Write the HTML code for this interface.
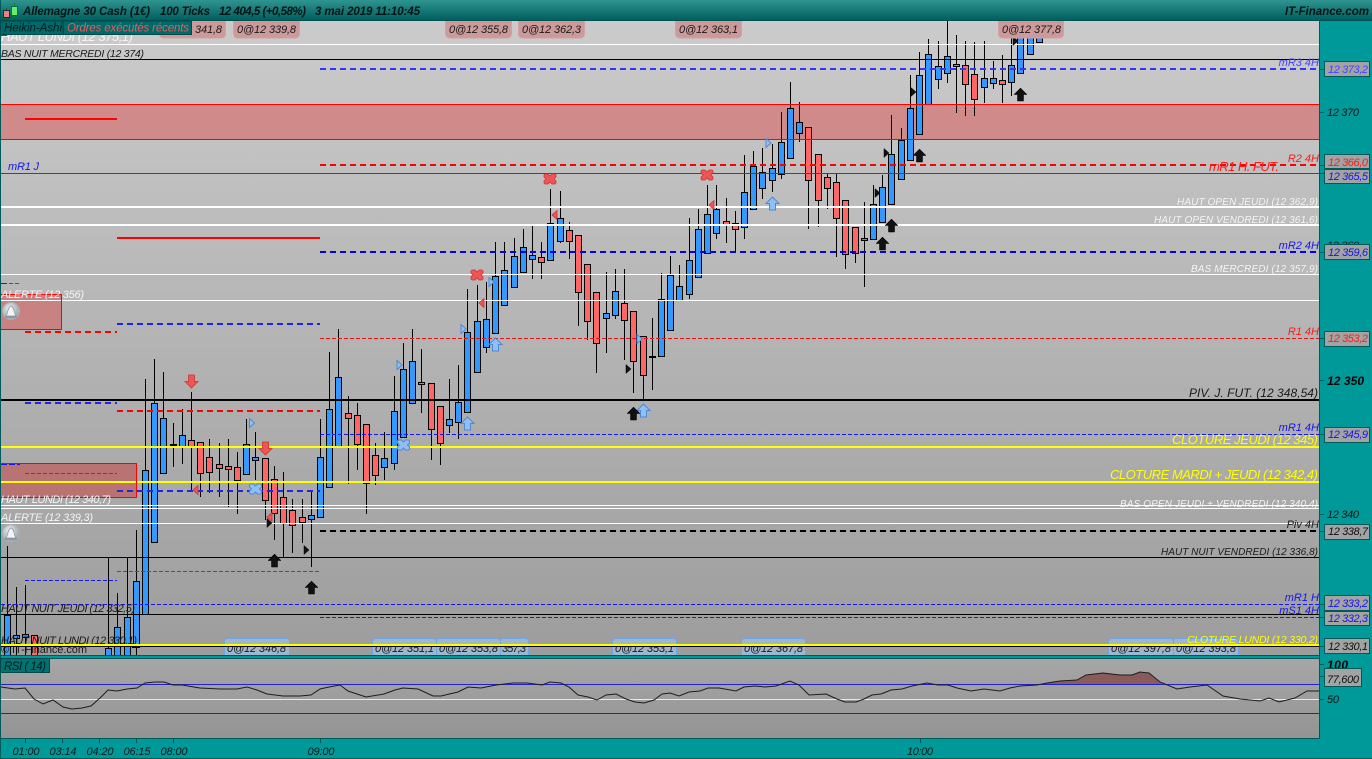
<!DOCTYPE html>
<html lang="fr"><head><meta charset="utf-8"><title>Allemagne 30 Cash</title>
<style>
html,body{margin:0;padding:0;background:#009999;width:1372px;height:759px;overflow:hidden}
svg{display:block;position:absolute;left:0;top:0}
text{font-family:"Liberation Sans",Arial,sans-serif;font-style:italic;font-size:11px;white-space:pre}
.b{font-weight:bold;font-size:11.5px}
.n{font-style:normal}
.w{fill:#f4f4f4}.k{fill:#1a1a1a}.y{fill:#ffff00}.r{fill:#ff1a1a}.u{fill:#1414ee}.u2{fill:#4444ff}
.p{fill:#a3a3a3;stroke:#005a5a;stroke-width:1}
.pink{fill:#cc9a9a;stroke:#d4a0a0;stroke-width:1}
.bl{fill:#a0b6cf;stroke:#6fa6e6;stroke-width:1}
.tab{fill:#006a6a;stroke:#004a4a;stroke-width:1}
</style></head><body>
<svg width="1372" height="759" viewBox="0 0 1372 759" xmlns="http://www.w3.org/2000/svg">
<defs>
<linearGradient id="t" x1="0" y1="0" x2="0" y2="1"><stop offset="0" stop-color="#2f9490"/><stop offset="1" stop-color="#005f5f"/></linearGradient>
<linearGradient id="c" x1="0" y1="0" x2="0" y2="1"><stop offset="0" stop-color="#cbcbcb"/><stop offset="1" stop-color="#9d9d9d"/></linearGradient>
<linearGradient id="s" x1="0" y1="0" x2="0" y2="1"><stop offset="0" stop-color="#a6a6a6"/><stop offset="1" stop-color="#949494"/></linearGradient>
<radialGradient id="bell" cx=".4" cy=".35" r=".7"><stop offset="0" stop-color="#ececec"/><stop offset="1" stop-color="#929da6"/></radialGradient>
<clipPath id="cc"><rect x="1" y="21" width="1318" height="634"/></clipPath>
<path id="up" d="M0 0l6.500 6.500h-3.500v6.500h-6v-6.500h-3.500z"/>
<path id="down" d="M0 13l6.500-6.500h-3.500v-6.500h-6v6.500h-3.500z"/>
<path id="rt" d="M0-4.500l5 4.500-5 4.500z"/>
<path id="lf" d="M0-4.500l-5 4.500 5 4.500z"/>
<path id="x" d="M-5-5h3l2 2 2-2h3l1 1v2l-2 2 2 2v2l-1 1h-3l-2-2-2 2h-3l-1-1v-2l2-2-2-2v-2z"/>
</defs>

<rect width="1372" height="759" fill="#009999"/>
<rect x="0" y="0" width="1372" height="20" fill="url(#t)"/>
<rect x="0" y="20" width="1372" height="1" fill="#004f4f"/>
<rect x="1" y="21" width="1318" height="634" fill="url(#c)"/>
<rect x="1" y="659" width="1318" height="79" fill="url(#s)"/>
<path d="M0 655.500H1319M0 658.500H1319M0 738.500H1319M0 758.500H1372M1319.500 20V739M.5 0V759" stroke="#005a5a" fill="none"/>

<g clip-path="url(#cc)">
<rect x="1" y="104" width="1318" height="35" fill="#d08a8a"/>
<rect x="1" y="294" width="61" height="36" fill="#c98282"/>
<rect x="1" y="463" width="135" height="35" fill="#b97373"/>

<path stroke="#000" fill="none" d="M7.500 546V655M16.500 587V655M25.500 585V655M34.500 635V655M108.500 558V655M117.500 593V655M127.500 558V655M136.500 530V655M145.500 379V614M154.500 359V542M163.500 372V473M173.500 423V467M182.500 409V464M191.500 392V491M200.500 442V497M209.500 439V493M219.500 443V497M228.500 439V507M237.500 452V514M246.500 419V474M255.500 432V480M265.500 458V520M274.500 466V540M283.500 472V557M292.500 499V553M302.500 499V543M311.500 492V567M320.500 419V517M329.500 352V487M338.500 329V447M348.500 396V484M357.500 403V470M366.500 424V514M375.500 443V485M384.500 432V480M394.500 376V470M403.500 343V437M412.500 329V403M421.500 349V413M431.500 383V460M440.500 406V465M449.500 379V433M458.500 365V439M467.500 289V412M477.500 285V372M486.500 282V353M495.500 242V333M504.500 242V305M514.500 238V287M523.500 229V272M532.500 226V279M541.500 242V279M550.500 189V260M560.500 191V243M569.500 222V259M578.500 235V326M587.500 264V340M596.500 292V373M606.500 272V353M615.500 269V319M624.500 269V360M633.500 311V393M643.500 336V399M652.500 318V390M661.500 273V356M670.500 256V330M679.500 265V300M689.500 218V299M698.500 209V277M707.500 185V253M716.500 185V239M726.500 198V243M735.500 211V252M744.500 155V239M753.500 151V209M762.500 148V199M772.500 144V192M781.500 112V179M790.500 82V158M799.500 102V142M808.500 127V229M818.500 154V227M827.500 173V209M836.500 174V257M845.500 200V269M855.500 227V263M864.500 202V287M873.500 185V239M882.500 175V222M891.500 115V204M901.500 128V179M910.500 75V160M919.500 52V134M928.500 39V104M938.500 41V89M947.500 20V83M956.500 35V113M965.500 41V116M974.500 42V116M984.500 41V103M993.500 61V89M1002.500 55V103M1011.500 33V96M1020.500 20V73M1030.500 20V54M1039.500 20V42"/>
<path stroke="#000" stroke-width="2" d="M170 445h7M649 357h7M132 647h8"/>

<path fill="#3399ff" stroke="#000" d="M4.500 615.500h6V660h-6zM13.500 635.500h6v3h-6zM22.500 634.500h6v3h-6zM105.500 648.500h6V660h-6zM114.500 627.500h6V660h-6zM124.500 617.500h6V660h-6zM133.500 581.500h6v66h-6zM142.500 470.500h6v144h-6zM151.500 403.500h6v139h-6zM160.500 418.500h6v55h-6zM179.500 435.500h6v11h-6zM243.500 444.500h6v30h-6zM252.500 457.500h6v3h-6zM308.500 515.500h6v4h-6zM317.500 457.500h6v60h-6zM326.500 409.500h6v78h-6zM335.500 377.500h6v70h-6zM381.500 458.500h6v9h-6zM391.500 411.500h6v52h-6zM400.500 369.500h6v68h-6zM409.500 361.500h6v42h-6zM446.500 419.500h6v6h-6zM455.500 402.500h6v20h-6zM464.500 332.500h6v80h-6zM474.500 321.500h6v51h-6zM483.500 319.500h6v28h-6zM492.500 276.500h6v57h-6zM501.500 270.500h6v35h-6zM511.500 256.500h6v31h-6zM520.500 247.500h6v25h-6zM529.500 255.500h6v4h-6zM547.500 223.500h6v37h-6zM557.500 218.500h6v23h-6zM603.500 313.500h6v5h-6zM612.500 291.500h6v24h-6zM658.500 299.500h6v57h-6zM667.500 275.500h6v55h-6zM676.500 286.500h6v14h-6zM686.500 260.500h6v34h-6zM695.500 229.500h6v48h-6zM704.500 214.500h6v39h-6zM713.500 209.500h6v24h-6zM741.500 192.500h6v35h-6zM750.500 166.500h6v43h-6zM759.500 172.500h6v16h-6zM769.500 168.500h6v12h-6zM778.500 142.500h6v32h-6zM787.500 108.500h6v50h-6zM796.500 122.500h6v11h-6zM861.500 238.500h6v2h-6zM870.500 204.500h6v35h-6zM879.500 187.500h6v35h-6zM888.500 154.500h6v50h-6zM898.500 140.500h6v39h-6zM907.500 108.500h6v52h-6zM916.500 75.500h6v59h-6zM925.500 54.500h6v50h-6zM935.500 66.500h6v13h-6zM944.500 56.500h6v17h-6zM981.500 78.500h6v9h-6zM990.500 78.500h6v5h-6zM1008.500 65.500h6v17h-6zM1017.500 20.500h6v53h-6zM1027.500 20.500h6v34h-6zM1036.500 20.500h6v22h-6z"/>
<path fill="#ff6666" stroke="#000" d="M31.500 635.500h6V660h-6zM188.500 440.500h6v6h-6zM197.500 442.500h6v31h-6zM206.500 457.500h6v15h-6zM216.500 464.500h6v4h-6zM225.500 466.500h6v3h-6zM234.500 467.500h6v13h-6zM262.500 458.500h6v42h-6zM271.500 479.500h6v34h-6zM280.500 497.500h6v26h-6zM289.500 510.500h6v15h-6zM299.500 517.500h6v5h-6zM345.500 413.500h6v5h-6zM354.500 415.500h6v29h-6zM363.500 424.500h6v59h-6zM372.500 455.500h6v20h-6zM418.500 382.500h6v2h-6zM428.500 383.500h6v46h-6zM437.500 406.500h6v37h-6zM538.500 257.500h6v5h-6zM566.500 230.500h6v11h-6zM575.500 235.500h6v57h-6zM584.500 264.500h6v57h-6zM593.500 292.500h6v51h-6zM621.500 303.500h6v17h-6zM630.500 311.500h6v50h-6zM640.500 336.500h6v39h-6zM723.500 221.500h6v3h-6zM732.500 223.500h6v6h-6zM805.500 127.500h6v53h-6zM815.500 154.500h6v46h-6zM824.500 177.500h6v11h-6zM833.500 182.500h6v36h-6zM842.500 200.500h6v54h-6zM852.500 227.500h6v26h-6zM953.500 64.500h6v2h-6zM962.500 65.500h6v19h-6zM971.500 74.500h6v25h-6zM999.500 80.500h6v4h-6z"/>

<g fill="none">
<path d="M1 44.500H1319M1 274.500H1319M1 300.500H1319M1 505.500H1319M1 508.500H1319M1 523.500H1319" stroke="#fff"/>
<path d="M1 207H1319M1 225H1319" stroke="#fff" stroke-width="2"/>
<path d="M1 59.500H1319M1 557.500H1319M1 614.500H1319" stroke="#000"/>
<path d="M1 400H1319" stroke="#000" stroke-width="2"/>
<path d="M1 104.500H1319M1 139.500H1319" stroke="#ff0000"/>
<path d="M1 173.500H1319" stroke="#cc1111"/>
<path d="M25 119H117M117 238H320" stroke="#ff0000" stroke-width="2"/>
<path d="M320 69H1319" stroke="#3333ff" stroke-width="2" stroke-dasharray="6 4"/>
<path d="M320 252H1319" stroke="#0000ee" stroke-width="2" stroke-dasharray="6 4"/>
<path d="M320 165H1319" stroke="#ff0000" stroke-width="2" stroke-dasharray="6 4"/>
<path d="M320 531H1319" stroke="#000" stroke-width="2" stroke-dasharray="6 4"/>
<path d="M117 324H320M25 403H117M117 491H320" stroke="#2222ee" stroke-width="2" stroke-dasharray="6 4"/>
<path d="M25 332H117M117 411H320" stroke="#ff0000" stroke-width="2" stroke-dasharray="6 4"/>
<path d="M320 338.500H1319M25 473.500H117M117 571.500H320" stroke="#ee1111" stroke-dasharray="4 2"/>
<path d="M320 434.500H1319M25 580.500H117M1 604.500H1319M320 617.500H1319" stroke="#1818ee" stroke-dasharray="4 2"/>
<path d="M1 283.500H8M1 464.500H20" stroke="#1818ee" stroke-dasharray="6 2"/>
<path d="M9 283.500H21" stroke="#ee1111" stroke-dasharray="4 2"/>
<path d="M1 447H1319M1 482H1319" stroke="#ffff00" stroke-width="2"/>
</g>
<rect x=".5" y="294.500" width="61" height="35" fill="none" stroke="#ff0000"/>
<rect x=".5" y="463.500" width="136" height="34" fill="none" stroke="#ff0000"/>

<g fill="#ee5555" stroke="#cc3333" stroke-width=".8">
<use href="#down" x="191.500" y="375"/><use href="#down" x="265.500" y="442"/>
<use href="#x" x="477" y="275"/><use href="#x" x="550" y="179"/><use href="#x" x="707" y="175"/>
<use href="#lf" x="198" y="490"/><use href="#lf" x="272" y="517"/><use href="#lf" x="484" y="303"/><use href="#lf" x="557" y="215"/><use href="#lf" x="714" y="205"/>
</g>
<g fill="#8fc0f5" stroke="#4f88d8" stroke-width="1">
<use href="#up" x="467.500" y="417"/><use href="#up" x="495.500" y="338"/><use href="#up" x="643.500" y="404"/><use href="#up" x="772.500" y="197"/>
<use href="#x" x="255.500" y="489"/><use href="#x" x="403.500" y="445"/>
<use href="#rt" x="249.500" y="423"/><use href="#rt" x="397" y="365"/><use href="#rt" x="461" y="329"/><use href="#rt" x="489" y="282"/><use href="#rt" x="766" y="143"/><use href="#rt" x="637" y="339"/>
</g>
<g fill="#111" stroke="#000" stroke-width=".5">
<use href="#up" x="274.500" y="554"/><use href="#up" x="311.500" y="581"/><use href="#up" x="633.500" y="407"/><use href="#up" x="882.500" y="237"/><use href="#up" x="891.500" y="219"/><use href="#up" x="919.500" y="149"/><use href="#up" x="1020.500" y="88"/>
<use href="#rt" x="304" y="550"/><use href="#rt" x="267" y="523"/><use href="#rt" x="626" y="369"/><use href="#rt" x="875" y="193"/><use href="#rt" x="884" y="153"/><use href="#rt" x="911" y="92"/><use href="#rt" x="1013" y="41"/>
</g>

<g>
<circle cx="11" cy="311" r="8.500" fill="url(#bell)" stroke="#a8b0b8"/>
<path d="M6 316c2-2 1.500-9 5-10 3.500 1 3 8 5 10z" fill="#f4f4f4" stroke="#8a96a0" stroke-width=".7"/>
<path d="M5 317h12" stroke="#7f8a94"/>
<circle cx="11" cy="533" r="8.500" fill="url(#bell)" stroke="#a8b0b8"/>
<path d="M6 538c2-2 1.500-9 5-10 3.500 1 3 8 5 10z" fill="#f4f4f4" stroke="#8a96a0" stroke-width=".7"/>
<path d="M5 539h12" stroke="#7f8a94"/>
</g>

<text x="1" y="41" class="w" style="font-size:13px" textLength="132">HAUT LUNDI (12 375,1)</text>
<text x="1" y="57" class="k" textLength="143" style="font-size:10.500px">BAS NUIT MERCREDI (12 374)</text>
<text x="8" y="170" class="u" textLength="31">mR1 J</text>
<text x="1" y="298" class="w" textLength="83">ALERTE (12 356)</text>
<text x="1" y="503" class="w" textLength="110">HAUT LUNDI (12 340,7)</text>
<text x="1" y="521" class="w" textLength="92">ALERTE (12 339,3)</text>
<text x="1" y="612" class="k" textLength="134">HAUT NUIT JEUDI (12 332,5)</text>
<text x="1" y="644" class="k" textLength="136">HAUT NUIT LUNDI (12 330,1)</text>
<text x="1" y="653" class="k n" textLength="86">© IT-Finance.com</text>

<g text-anchor="end">
<text x="1319" y="66" class="u2">mR3 4H</text>
<text x="1319" y="162" class="r">R2 4H</text>
<text x="1279" y="171" class="r" style="font-size:13px" textLength="70">mR1 H. FUT.</text>
<text x="1318" y="205" class="w" style="font-size:10px" textLength="141">HAUT OPEN JEUDI (12 362,9)</text>
<text x="1318" y="223" class="w" style="font-size:10px" textLength="164">HAUT OPEN VENDREDI (12 361,6)</text>
<text x="1319" y="249" class="u">mR2 4H</text>
<text x="1318" y="272" class="w" style="font-size:10px" textLength="127">BAS MERCREDI (12 357,9)</text>
<text x="1319" y="335" class="r">R1 4H</text>
<text x="1318" y="397" class="k" style="font-size:12px" textLength="129">PIV. J. FUT. (12 348,54)</text>
<text x="1319" y="431" class="u">mR1 4H</text>
<text x="1318" y="444" class="y" style="font-size:13px" textLength="146">CLOTURE JEUDI (12 345)</text>
<text x="1318" y="479" class="y" style="font-size:13px" textLength="208">CLOTURE MARDI + JEUDI (12 342,4)</text>
<text x="1318" y="507" class="w" style="font-size:10px" textLength="198">BAS OPEN JEUDI + VENDREDI (12 340,4)</text>
<text x="1319" y="528" class="k">Piv 4H</text>
<text x="1318" y="555" class="k" style="font-size:10px" textLength="157">HAUT NUIT VENDREDI (12 336,8)</text>
<text x="1319" y="601" class="u">mR1 H</text>
<text x="1319" y="614" class="u">mS1 4H</text>
</g>

<rect x="224.500" y="638.500" width="65" height="20" rx="3" class="bl"/>
<rect x="372.500" y="638.500" width="64" height="20" rx="3" class="bl"/>
<rect x="436.500" y="638.500" width="64" height="20" rx="3" class="bl"/>
<rect x="500.500" y="638.500" width="28" height="20" rx="3" class="bl"/>
<rect x="612.500" y="638.500" width="64" height="20" rx="3" class="bl"/>
<rect x="741.500" y="638.500" width="64" height="20" rx="3" class="bl"/>
<rect x="1108.500" y="638.500" width="65" height="20" rx="3" class="bl"/>
<rect x="1173.500" y="638.500" width="65" height="20" rx="3" class="bl"/>
<g fill="#1a1a1a">
<text x="227" y="652" textLength="59">0@12 346,8</text>
<text x="375" y="652" textLength="59">0@12 351,1</text>
<text x="439" y="652" textLength="59">0@12 353,8</text>
<text x="502" y="652" textLength="24">357,3</text>
<text x="615" y="652" textLength="59">0@12 353,1</text>
<text x="744" y="652" textLength="59">0@12 367,8</text>
<text x="1111" y="652" textLength="60">0@12 397,8</text>
<text x="1176" y="652" textLength="60">0@12 393,8</text>
</g>
<path d="M1 645H1319" stroke="#ffff00" stroke-width="2"/>
<path d="M1 646.500H1319" stroke="#000"/>
<text x="1318" y="643" text-anchor="end" class="y" style="font-size:10.500px" textLength="131">CLOTURE LUNDI (12 330,2)</text>

<rect x="159.500" y="17" width="66" height="21" rx="4" class="pink"/>
<rect x="233.500" y="17" width="66" height="21" rx="4" class="pink"/>
<rect x="445.500" y="17" width="66" height="21" rx="4" class="pink"/>
<rect x="518.500" y="17" width="66" height="21" rx="4" class="pink"/>
<rect x="675.500" y="17" width="66" height="21" rx="4" class="pink"/>
<rect x="998.500" y="17" width="65" height="21" rx="4" class="pink"/>
<text x="195" y="33" class="k" textLength="27">341,8</text>
<text x="237" y="33" class="k" textLength="59">0@12 339,8</text>
<text x="449" y="33" class="k" textLength="59">0@12 355,8</text>
<text x="522" y="33" class="k" textLength="59">0@12 362,3</text>
<text x="679" y="33" class="k" textLength="59">0@12 363,1</text>
<text x="1002" y="33" class="k" textLength="59">0@12 377,8</text>
<path d="M1 35.500h6" stroke="#ff0000"/>
</g>

<rect x=".5" y="21" width="62.500" height="13.500" class="tab"/>
<rect x="63.500" y="21" width="128" height="13.500" class="tab"/>
<text x="4" y="31.500" fill="#001a1a" style="font-size:11.500px" textLength="58">Heikin-Ashi</text>
<text x="67" y="31.500" fill="#e85c5c" style="font-size:11.500px" textLength="122">Ordres exécutés récents</text>

<path d="M6.500 8V20" stroke="#0a6a0a"/><rect x="3.500" y="10.500" width="6" height="7" fill="#f08080" stroke="#114" stroke-width=".8"/>
<path d="M14.500 3V18" stroke="#0a8a0a"/><rect x="11.500" y="6.500" width="6" height="9" fill="#66ee66" stroke="#055" stroke-width=".8"/>
<g fill="#001414">
<text x="23" y="15" class="b" textLength="127">Allemagne 30 Cash (1€)</text>
<text x="160" y="15" class="b" textLength="50">100 Ticks</text>
<text x="219" y="15" class="b" textLength="87">12 404,5 (+0,58%)</text>
<text x="315" y="15" class="b" textLength="105">3 mai 2019 11:10:45</text>
<text x="1285" y="15" class="b" textLength="84">IT-Finance.com</text>
</g>

<path d="M1320 69.500h4M1320 112.500h4M1320 165.500h4M1320 173.500h4M1320 252.500h4M1320 338.500h4M1320 380.500h4M1320 434.500h4M1320 514.500h4M1320 531.500h4M1320 604.500h4M1320 617.500h4M1320 646.500h4M1320 664.500h4M1320 676.500h4M1320 699.500h4" stroke="#005a5a"/>
<text x="1327" y="116" fill="#0a1414" textLength="32">12 370</text>
<text x="1327" y="385" fill="#000" class="b" style="font-size:12px" textLength="37">12 350</text>
<text x="1327" y="518" fill="#0a1414" textLength="32">12 340</text>
<text x="1327" y="669" fill="#000" class="b" style="font-size:12px" textLength="21">100</text>
<text x="1327" y="703" fill="#0a1414" textLength="12">50</text>
<text x="1327" y="249" fill="#0a1414" textLength="32">12 360</text>

<rect x="1324.500" y="61.500" width="45" height="15" class="p"/><text x="1328" y="73" fill="#4444ff" textLength="40">12 373,2</text>
<rect x="1324.500" y="154.500" width="45" height="14" class="p"/><text x="1328" y="166" fill="#ff1a1a" textLength="40">12 366,0</text>
<rect x="1324.500" y="169.500" width="45" height="14" class="p"/><text x="1328" y="180" fill="#1414ee" textLength="40">12 365,5</text>
<rect x="1324.500" y="244.500" width="45" height="15" class="p"/><text x="1328" y="256" fill="#1414ee" textLength="40">12 359,6</text>
<rect x="1324.500" y="331.500" width="45" height="15" class="p"/><text x="1328" y="342" fill="#ff1a1a" textLength="40">12 353,2</text>
<rect x="1324.500" y="427.500" width="45" height="15" class="p"/><text x="1328" y="438" fill="#1414ee" textLength="40">12 345,9</text>
<rect x="1324.500" y="524.500" width="45" height="15" class="p"/><text x="1328" y="535" fill="#111" textLength="40">12 338,7</text>
<rect x="1324.500" y="595.500" width="45" height="15" class="p"/><text x="1328" y="607" fill="#1414ee" textLength="40">12 333,2</text>
<rect x="1324.500" y="611.500" width="45" height="14" class="p"/><text x="1328" y="622" fill="#1414ee" textLength="40">12 332,3</text>
<rect x="1324.500" y="638.500" width="45" height="15" class="p"/><text x="1328" y="650" fill="#111" textLength="40">12 330,1</text>
<rect x="1324.500" y="668.500" width="37" height="18" class="p"/><text x="1327" y="683" fill="#111" textLength="32">77,600</text>

<path fill="#8b5a5a" d="M1040 684.500L1047 683L1060 681L1077 680L1086 675L1103 673L1120 675L1132 675L1140 672L1149 673L1160 682L1164 684.500z"/>
<path fill="none" stroke="#2222cc" d="M1 684.500H1319M1 713.500H1319"/>
<path fill="none" stroke="#ffff33" d="M1 699.500H1319"/>
<polyline fill="none" stroke="#1c1c1c" points="1,687 15,689 25,688 34,699 43,704 53,700 63,707 72,709 82,708 91,706 100,698 108,690 117,691 127,689 137,688 145,683 155,682 164,682 173,685 182,685 200,688 220,689 237,689 247,687 257,690 267,694 283,696 300,696 311,695 320,689 329,687 340,685 348,691 366,697 384,694 395,690 403,688 418,689 433,696 441,696 458,692 468,687 481,688 496,685 513,683 527,683 542,685 550,682 561,683 569,687 578,695 588,697 597,700 606,695 616,694 626,699 635,702 644,703 654,700 662,694 670,693 679,696 689,692 700,691 708,688 719,688 736,691 744,687 755,686 765,687 776,686 790,681 799,685 809,695 826,694 837,699 845,702 856,702 864,699 872,695 881,694 891,690 902,689 912,686 927,683 938,685 948,685 957,688 971,691 984,689 1000,691 1010,688 1020,686 1037,685 1047,683 1060,681 1077,680 1086,675 1103,673 1120,675 1132,675 1140,672 1149,673 1160,682 1177,689 1190,687 1207,685 1223,696 1240,699 1260,701 1269,698 1279,702 1295,698 1307,691 1319,691"/>
<rect x=".5" y="658.500" width="49" height="14" class="tab" style="fill:#007272"/>
<text x="4" y="670" fill="#001a1a" style="font-size:11.500px" textLength="42">RSI ( 14)</text>

<path d="M25.500 739v4M62.500 739v4M99.500 739v4M136.500 739v4M173.500 739v4M320.500 739v4M920.500 739v4" stroke="#004f4f"/>
<g fill="#0a1a1a" text-anchor="middle">
<text x="26" y="755" textLength="27">01:00</text>
<text x="63" y="755" textLength="27">03:14</text>
<text x="100" y="755" textLength="27">04:20</text>
<text x="137" y="755" textLength="27">06:15</text>
<text x="174" y="755" textLength="27">08:00</text>
<text x="321" y="755" textLength="27">09:00</text>
<text x="920" y="755" textLength="26">10:00</text>
</g>
</svg>
</body></html>
